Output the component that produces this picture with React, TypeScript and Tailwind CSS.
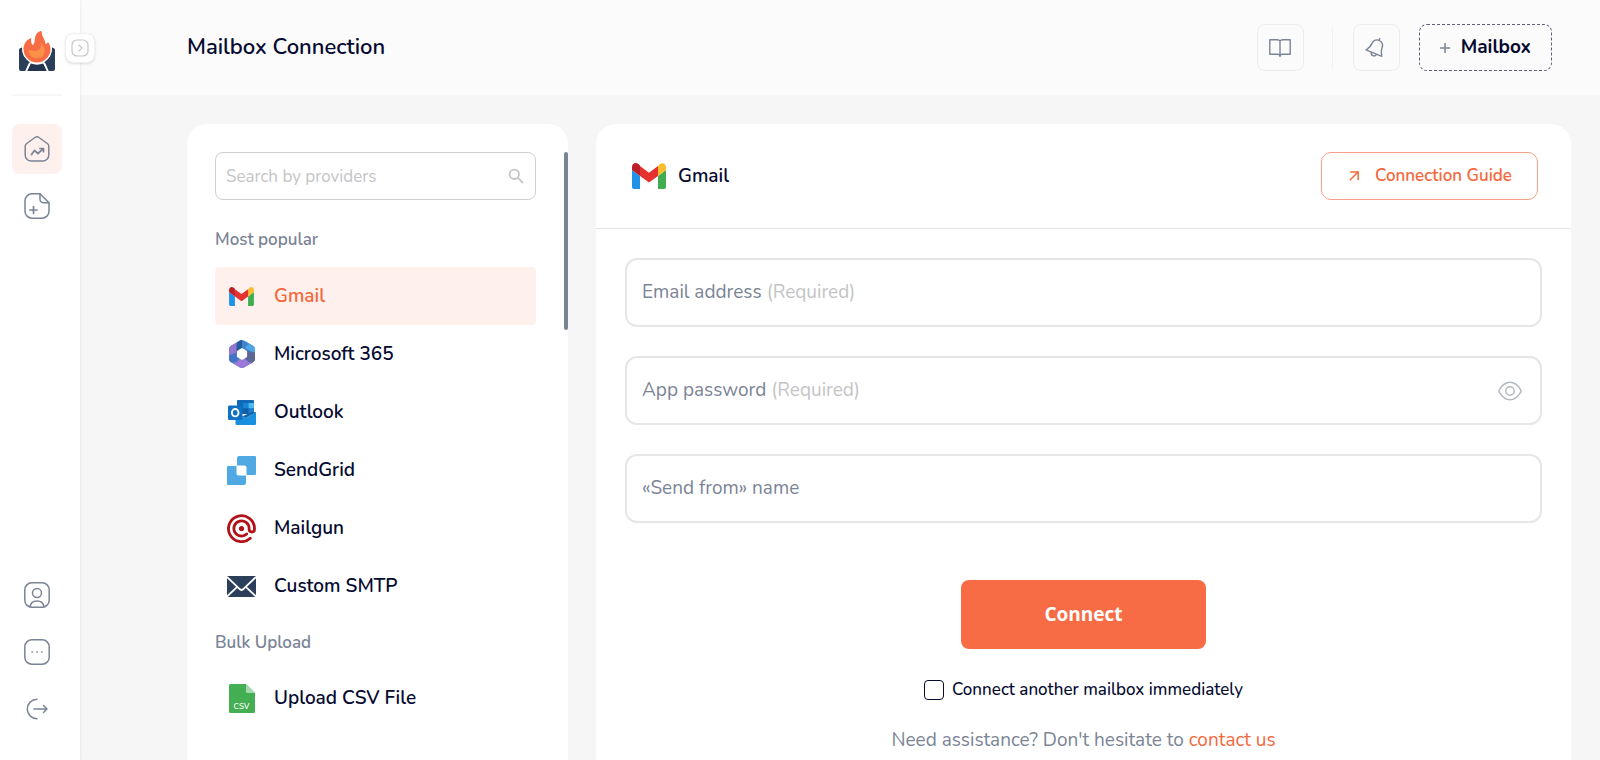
import React from "react";

type IconProps = { className?: string };

const Logo = () => (
  <svg viewBox="0 0 38 42" className="h-[42px] w-[38px]" aria-hidden="true">
    <path d="M1 20q0-1.500 1.500-2L4 17.500Q4 27.500 12 31.500L7.500 41H3a2 2 0 0 1-2-2z" fill="#2b3f5b" />
    <path d="M37 20q0-1.500-1.500-2L34 17.500q0 10-8 14L30.500 41H35a2 2 0 0 0 2-2z" fill="#2b3f5b" />
    <path d="M12.800 33.500q6.200 2.300 12.400 0L29 41H9z" fill="#22344f" />
    <path d="M11.800 33L8.200 41M26.200 33l3.600 8" stroke="#fff" strokeWidth="1.800" fill="none" />
    <path d="M22 1.200c-4 1.800-5 5-5.300 9.300-.2 2.500-1 4-2.200 4.500-1.200-1.500-1.700-4.500-1.300-7C8.500 9.500 5.500 14 5.500 19c0 7.500 6 13.500 13.500 13.500S32.500 26.500 32.500 19c0-2.800-1-5-2.500-7-.5 1-1.300 1.700-2.500 2C27 9 24 7 23.800 2.500c0-1-.8-1.700-1.800-1.300z" fill="#f86c45" stroke="#fff" strokeWidth="2.400" paintOrder="stroke" />
    <path d="M22.500 12.500c1 3 .5 6-2 7.500-3 1.800-7 .5-10.500.3 1 4.500 4.500 8 9 8 5 0 8-4 7.500-8.500-.3-3-1.500-5.500-4-7.300z" fill="#fa9148" />
  </svg>
);

const HomeTrend = () => (
  <svg viewBox="0 0 28 28" className="size-7" fill="none" stroke="#7b8496" strokeWidth="1.500" strokeLinecap="round" strokeLinejoin="round" aria-hidden="true">
    <path d="M12 2.500a3.500 3.500 0 0 1 4 0l8.300 6a3.500 3.500 0 0 1 1.500 3V20a6 6 0 0 1-6 6H8.200a6 6 0 0 1-6-6v-8.500a3.500 3.500 0 0 1 1.500-3z" />
    <path d="M8.500 19.500l3-4 3.500 3 5.300-4.800M17 13.500h3.500v3.200" strokeWidth="1.700" />
  </svg>
);

const FilePlus = () => (
  <svg viewBox="0 0 28 28" className="size-7" fill="none" stroke="#7b8496" strokeWidth="1.500" strokeLinecap="round" strokeLinejoin="round" aria-hidden="true">
    <path d="M17 1.800H9a7 7 0 0 0-7 7v10.400a7 7 0 0 0 7 7h10a7 7 0 0 0 7-7v-8.400z" />
    <path d="M17 1.800v5.500a3.500 3.500 0 0 0 3.500 3.500H26" />
    <path d="M7 18h7M10.500 14.500v7" strokeWidth="1.700" />
  </svg>
);

const UserSquare = () => (
  <svg viewBox="0 0 28 28" className="size-7" fill="none" stroke="#7b8496" strokeWidth="1.500" strokeLinecap="round" aria-hidden="true">
    <rect x="1.800" y="1.800" width="24.400" height="24.400" rx="7" />
    <circle cx="14" cy="12" r="4.500" />
    <path d="M7 25.800c.5-3.600 3.400-5.800 7-5.800s6.500 2.200 7 5.800" />
  </svg>
);

const MoreSquare = () => (
  <svg viewBox="0 0 28 28" className="size-7" fill="none" stroke="#7b8496" strokeWidth="1.500" aria-hidden="true">
    <rect x="1.800" y="1.800" width="24.400" height="24.400" rx="7" />
    <g fill="#9aa1ae" stroke="none">
      <circle cx="9.200" cy="14" r="1" />
      <circle cx="14" cy="14" r="1" />
      <circle cx="18.800" cy="14" r="1" />
    </g>
  </svg>
);

const Logout = () => (
  <svg viewBox="0 0 28 28" className="size-7" fill="none" stroke="#7b8496" strokeWidth="1.500" strokeLinecap="round" strokeLinejoin="round" aria-hidden="true">
    <path d="M14 4.300a9.700 9.700 0 0 0 0 19.400M11 14h13M20.500 10.500L24 14l-3.500 3.500" />
  </svg>
);

const CollapseIcon = () => (
  <svg viewBox="0 0 18 18" className="size-[18px]" fill="none" stroke="#c6c6c8" strokeWidth="1.200" strokeLinecap="round" strokeLinejoin="round" aria-hidden="true">
    <rect x="1" y="1" width="16" height="16" rx="5" />
    <path d="M8 6l3 3-3 3" />
  </svg>
);

const BookIcon = () => (
  <svg viewBox="0 0 24 20" className="h-5 w-6" fill="none" stroke="#7b8496" strokeWidth="1.400" strokeLinejoin="round" aria-hidden="true">
    <path d="M12 3.200c-.6-1-1.500-1.400-2.600-1.400H1.800v14.500h8c1.200 0 1.900.4 2.200 1.700.3-1.300 1-1.700 2.200-1.700h8V1.800h-7.600c-1.100 0-2 .4-2.600 1.400zV19" />
  </svg>
);

const BellIcon = () => (
  <svg viewBox="0 0 22 22" className="size-[22px]" fill="none" stroke="#7b8496" strokeWidth="1.400" strokeLinecap="round" strokeLinejoin="round" aria-hidden="true">
    <g transform="rotate(22 11 11)">
      <path d="M11 .8v2M11 2.800c-3.600 0-5.500 2.600-5.500 5.700 0 4-1.500 5.500-3 8h17c-1.500-2.500-3-4-3-8 0-3.100-1.900-5.700-5.500-5.700zM8.300 16.800c.2 1.700 1.300 2.500 2.700 2.500s2.500-.8 2.700-2.500" />
    </g>
  </svg>
);

const EyeIcon = () => (
  <svg viewBox="0 0 24 20" className="h-5 w-6" fill="none" stroke="#b4b8c0" strokeWidth="1.500" aria-hidden="true">
    <path d="M1.700 11.800c-1-1.200-1-2.400 0-3.600C4.200 4.200 8 1.300 12 1.300s7.800 2.900 10.300 6.900c1 1.200 1 2.400 0 3.600-2.500 4-6.300 6.900-10.300 6.900s-7.800-2.900-10.300-6.900z" />
    <circle cx="12" cy="10" r="4.200" />
  </svg>
);

const SearchIcon = () => (
  <svg viewBox="0 0 16 16" className="size-4" fill="none" stroke="#c4c5c8" strokeWidth="1.800" aria-hidden="true">
    <circle cx="6.300" cy="6.300" r="4.700" />
    <path d="M9.700 9.700l5.300 5.300" />
  </svg>
);

const GmailIcon = ({ className }: IconProps) => (
  <svg viewBox="0 0 34 26" className={className} aria-hidden="true">
    <path d="M0 7l8 6v13H2a2 2 0 0 1-2-2z" fill="#1e93e8" />
    <path d="M34 7l-8 6v13h6a2 2 0 0 0 2-2z" fill="#41ad50" />
    <path d="M26 3v10l8-6V4c0-3.700-3.800-5-6.300-2.700z" fill="#fbbd2c" />
    <path d="M8 3l9 6.700L26 3v10l-9 6.400L8 13z" fill="#e4332f" />
    <path d="M0 4C0 .3 3.800-1 6.300 1L8 2.500V13L0 7z" fill="#be1f26" />
  </svg>
);

const MicrosoftIcon = () => (
  <svg viewBox="0 0 26 28" className="h-7 w-[26px]" aria-hidden="true">
    <path d="M11 .6a4 4 0 0 1 4 0l9 5.200a4 4 0 0 1 2 3.500v9.400a4 4 0 0 1-2 3.500l-9 5.200a4 4 0 0 1-4 0l-9-5.200a4 4 0 0 1-2-3.500V9.300a4 4 0 0 1 2-3.500z" fill="#3d84cc" />
    <path d="M8.500 2L2 5.800A4 4 0 0 0 0 9.300V17l8-4V5z" fill="#9376d0" />
    <path d="M11 .6L8.500 2C8 3 7.500 4.500 7.500 6v9L13 9V.1a4 4 0 0 0-2 .5z" fill="#275c9c" />
    <path d="M16 8l10 5.500V9.300a4 4 0 0 0-2-3.500L20 3.500z" fill="#4fa6e6" />
    <path d="M26 12.500v6.200a4 4 0 0 1-2 3.500l-2 1.200-5.500-4L18 11z" fill="#5d6796" />
    <path d="M0 15.500v3.200a4 4 0 0 0 2 3.500c3.500 1.300 6.500.3 7.500-2.700L8 12z" fill="#4273c4" />
    <path d="M2 22.200l9 5.200a4 4 0 0 0 4 0l8.500-5c-4 .5-6-1.400-7.500-4.400l-6.500 1.500C8.500 22.500 5.500 23.500 2 22.200z" fill="#9b79d8" />
    <path d="M13 9.300l4 2.300v4.800l-4 2.300-4-2.300v-4.800z" fill="#fff" stroke="#fff" strokeWidth="2.200" strokeLinejoin="round" />
  </svg>
);

const OutlookIcon = () => (
  <svg viewBox="0 0 28 25" className="h-[25px] w-7" aria-hidden="true">
    <path d="M10 0h15a1 1 0 0 1 1 1v13H9V1a1 1 0 0 1 1-1z" fill="#1169b6" />
    <path d="M15 3h5.500v5.500H15z" fill="#1485d5" />
    <path d="M20.500 3H26v5.500h-5.500z" fill="#4fb8f0" />
    <path d="M15 8.500h5.500V14H15z" fill="#0f5fa8" />
    <path d="M20.500 8.500H26V14h-5.500z" fill="#1c7fce" />
    <path d="M7.500 12l10 6L28 12v12a1 1 0 0 1-1 1H8.500a1 1 0 0 1-1-1z" fill="#1a8edf" />
    <path d="M28 12l-10.500 6-3-1.700L24 12z" fill="#1260a8" />
    <rect y="5.500" width="14.500" height="14.500" rx="1.200" fill="#0f70c4" />
    <ellipse cx="7.200" cy="12.700" rx="3.300" ry="3.700" fill="none" stroke="#fff" strokeWidth="1.900" />
  </svg>
);

const SendGridIcon = () => (
  <svg viewBox="0 0 29 29" className="size-[29px]" fill="#51a9e3" aria-hidden="true">
    <path d="M12 0h16a1 1 0 0 1 1 1v17a1 1 0 0 1-1 1h-8.500v-7a2.500 2.500 0 0 0-2.500-2.500H10V2a2 2 0 0 1 2-2z" />
    <path d="M1 10h8.500v7a2.500 2.500 0 0 0 2.500 2.500h7V27a2 2 0 0 1-2 2H1a1 1 0 0 1-1-1V11a1 1 0 0 1 1-1z" />
  </svg>
);

const MailgunIcon = () => (
  <svg viewBox="0 0 29 29" className="size-[29px]" fill="none" stroke="#b01217" strokeLinecap="round" aria-hidden="true">
    <path d="M23.300 24.200A13 13 0 1 1 27.500 14.500v.8a2.700 2.700 0 0 1-5.400 0v-.8a7.600 7.600 0 1 0-2.400 5.500" strokeWidth="2.800" />
    <circle cx="14.500" cy="14.500" r="2.600" fill="#b01217" stroke="none" />
  </svg>
);

const EnvelopeIcon = () => (
  <svg viewBox="0 0 29 21" className="h-[21px] w-[29px]" aria-hidden="true">
    <rect width="29" height="21" rx="1" fill="#2b3f5b" />
    <path d="M0 1l13 12.300q1.500 1.300 3 0L29 1M0 20.500l10.200-9.700M29 20.500l-10.200-9.700" fill="none" stroke="#fff" strokeWidth="1.800" />
  </svg>
);

const CsvIcon = () => (
  <svg viewBox="0 0 26 29" className="h-[29px] w-[26px]" aria-hidden="true">
    <path d="M1.500 0H17l9 9v18.500a1.500 1.500 0 0 1-1.500 1.500h-23A1.500 1.500 0 0 1 0 27.500v-26A1.500 1.500 0 0 1 1.500 0z" fill="#43ae52" />
    <path d="M17 0l9 9h-7.500A1.500 1.500 0 0 1 17 7.500z" fill="#a5d8ab" />
    <text x="12.500" y="24.500" textAnchor="middle" fontSize="8" fontFamily="Nunito, Open Sans, sans-serif" fill="#fff">CSV</text>
  </svg>
);

type Provider = { name: string; icon: React.ReactNode; active?: boolean };

const popular: Provider[] = [
  { name: "Gmail", icon: <GmailIcon className="h-[19px] w-[25px]" />, active: true },
  { name: "Microsoft 365", icon: <MicrosoftIcon /> },
  { name: "Outlook", icon: <OutlookIcon /> },
  { name: "SendGrid", icon: <SendGridIcon /> },
  { name: "Mailgun", icon: <MailgunIcon /> },
  { name: "Custom SMTP", icon: <EnvelopeIcon /> },
];

const ProviderRow = ({ name, icon, active }: Provider) => (
  <li>
    <button
      type="button"
      className={
        active
          ? "flex h-[58px] w-full items-center gap-[18px] rounded bg-[#fef0ed] px-3 text-left text-[19px] font-semibold text-[#f5683c]"
          : "flex h-[58px] w-full items-center gap-[18px] rounded px-3 text-left text-[19px] font-semibold text-[#050a30]"
      }
    >
      <span className="flex w-[29px] justify-center">{icon}</span>
      {name}
    </button>
  </li>
);

type FieldProps = {
  id: string;
  label: string;
  type: string;
  required?: boolean;
  children?: React.ReactNode;
};

const Field = ({ id, label, type, required, children }: FieldProps) => (
  <div className="relative">
    <input
      id={id}
      type={type}
      placeholder=" "
      required={required}
      className="peer h-[69px] w-full rounded-xl border-2 border-[#e6e6e8] bg-white px-4 text-[19px] text-[#050a30] outline-none focus:border-[#f86c45]"
    />
    <label
      htmlFor={id}
      className="pointer-events-none invisible absolute inset-y-0 left-[17px] flex items-center gap-[5px] text-[19px] text-[#7b8496] peer-placeholder-shown:visible"
    >
      {label}
      {required && <span className="text-[#c4c4c6]">(Required)</span>}
    </label>
    {children}
  </div>
);

const NavButton = ({ label, active, children }: { label: string; active?: boolean; children: React.ReactNode }) => (
  <button
    type="button"
    aria-label={label}
    className={
      active
        ? "flex size-[50px] items-center justify-center rounded-lg bg-[#fef0ed]"
        : "flex size-[50px] items-center justify-center rounded-lg"
    }
  >
    {children}
  </button>
);

export default function App() {
  return (
    <div className="flex h-screen overflow-hidden bg-[#f6f6f6] font-['Nunito','Open_Sans',sans-serif] text-[#050a30]">
      <aside className="relative z-10 flex w-20 shrink-0 flex-col bg-white pl-3 shadow-[1px_0_2px_rgba(0,0,0,0.06)]">
        <a href="#" aria-label="Home" className="flex h-24 w-[50px] items-center justify-center border-b-2 border-[#f6f6f6] pt-2">
          <Logo />
        </a>
        <button
          type="button"
          aria-label="Expand sidebar"
          className="absolute top-[33px] -right-[15px] flex size-[30px] items-center justify-center rounded-lg border border-[#f0f0f0] bg-white shadow-sm"
        >
          <CollapseIcon />
        </button>
        <nav className="flex flex-1 flex-col gap-[7px] pt-7 pb-[26px]">
          <NavButton label="Dashboard" active><HomeTrend /></NavButton>
          <NavButton label="New file"><FilePlus /></NavButton>
          <div className="mt-auto flex flex-col gap-[7px]">
            <NavButton label="Profile"><UserSquare /></NavButton>
            <NavButton label="More"><MoreSquare /></NavButton>
            <NavButton label="Log out"><Logout /></NavButton>
          </div>
        </nav>
      </aside>

      <div className="flex min-w-0 flex-1 flex-col">
        <header className="flex h-[95px] shrink-0 items-center bg-[#fbfbfb] pr-12 pl-[107px]">
          <h1 className="text-[22px] font-semibold">Mailbox Connection</h1>
          <div className="ml-auto flex items-center">
            <button type="button" aria-label="Documentation" className="flex size-[47px] items-center justify-center rounded-lg border border-[#ebebeb]">
              <BookIcon />
            </button>
            <div className="mr-5 ml-7 h-10 w-px bg-[#f1f1f1]" />
            <button type="button" aria-label="Notifications" className="mr-[19px] flex size-[47px] items-center justify-center rounded-lg border border-[#ebebeb]">
              <BellIcon />
            </button>
            <button type="button" className="flex h-[47px] items-center gap-[11px] rounded-lg border border-dashed border-[#5c6078] px-5 text-[19px] font-bold">
              <svg viewBox="0 0 10 10" className="size-[10px]" stroke="#7b8496" strokeWidth="1.500" aria-hidden="true">
                <path d="M5 0v10M0 5h10" />
              </svg>
              Mailbox
            </button>
          </div>
        </header>

        <main className="flex min-h-0 flex-1 gap-7 pt-[29px] pr-[29px] pl-[107px]">
          <section className="flex w-[381px] shrink-0 rounded-t-[20px] bg-white pt-7 pl-7">
            <div className="min-w-0 flex-1">
              <div className="relative">
                <input
                  type="search"
                  aria-label="Search by providers"
                  placeholder="Search by providers"
                  className="h-12 w-full rounded-lg border border-[#cfcfd2] px-[10px] text-[17px] outline-none placeholder:text-[#c4c4c6]"
                />
                <span className="pointer-events-none absolute inset-y-0 right-3 flex items-center">
                  <SearchIcon />
                </span>
              </div>
              <h2 className="mt-7 text-[17px] leading-6 font-semibold text-[#7b8496]">Most popular</h2>
              <ul className="mt-[15px]">
                {popular.map((p) => (
                  <ProviderRow key={p.name} {...p} />
                ))}
              </ul>
              <h2 className="mt-4 text-[17px] leading-6 font-semibold text-[#7b8496]">Bulk Upload</h2>
              <ul className="mt-[14px]">
                <ProviderRow name="Upload CSV File" icon={<CsvIcon />} />
              </ul>
            </div>
            <div className="ml-7 h-[178px] w-1 rounded-full bg-[#7b8496]" />
          </section>

          <section className="flex min-w-0 flex-1 flex-col rounded-t-[20px] bg-white">
            <div className="flex h-[105px] shrink-0 items-center border-b border-[#e3e3e5] pr-[33px] pl-9">
              <GmailIcon className="h-[26px] w-[34px]" />
              <h2 className="ml-3 text-[19px] font-semibold">Gmail</h2>
              <a href="#" className="ml-auto flex h-12 items-center gap-[14px] rounded-[10px] border border-[#f8a08a] px-[25px] text-[17px] font-semibold text-[#f5683c]">
                <svg viewBox="0 0 12 12" className="mx-[2px] size-[10px]" fill="none" stroke="currentColor" strokeWidth="1.800" aria-hidden="true">
                  <path d="M1 11L10.500 1.500M1.500 1.200h9.500v9.500" />
                </svg>
                Connection Guide
              </a>
            </div>
            <form className="flex flex-col gap-[29px] px-[29px] pt-[29px]">
              <Field id="email" label="Email address" type="email" required />
              <Field id="password" label="App password" type="password" required>
                <button type="button" aria-label="Show password" className="absolute inset-y-0 right-5 flex items-center">
                  <EyeIcon />
                </button>
              </Field>
              <Field id="from-name" label="«Send from» name" type="text" />
              <div className="flex flex-col items-center pt-7">
                <button type="submit" className="h-[69px] w-[245px] rounded-lg bg-[#f86c45] font-['Open_Sans',sans-serif] text-[19px] font-bold text-white">
                  Connect
                </button>
                <label className="mt-[29px] flex items-center gap-2 text-[17px] leading-6 font-medium">
                  <input type="checkbox" className="size-5 appearance-none rounded border border-[#050a30] checked:bg-[#f86c45]" />
                  Connect another mailbox immediately
                </label>
                <p className="mt-6 text-[19px] text-[#7b8496]">
                  Need assistance? Don't hesitate to <a href="#" className="text-[#f5683c]">contact us</a>
                </p>
              </div>
            </form>
          </section>
        </main>
      </div>
    </div>
  );
}
